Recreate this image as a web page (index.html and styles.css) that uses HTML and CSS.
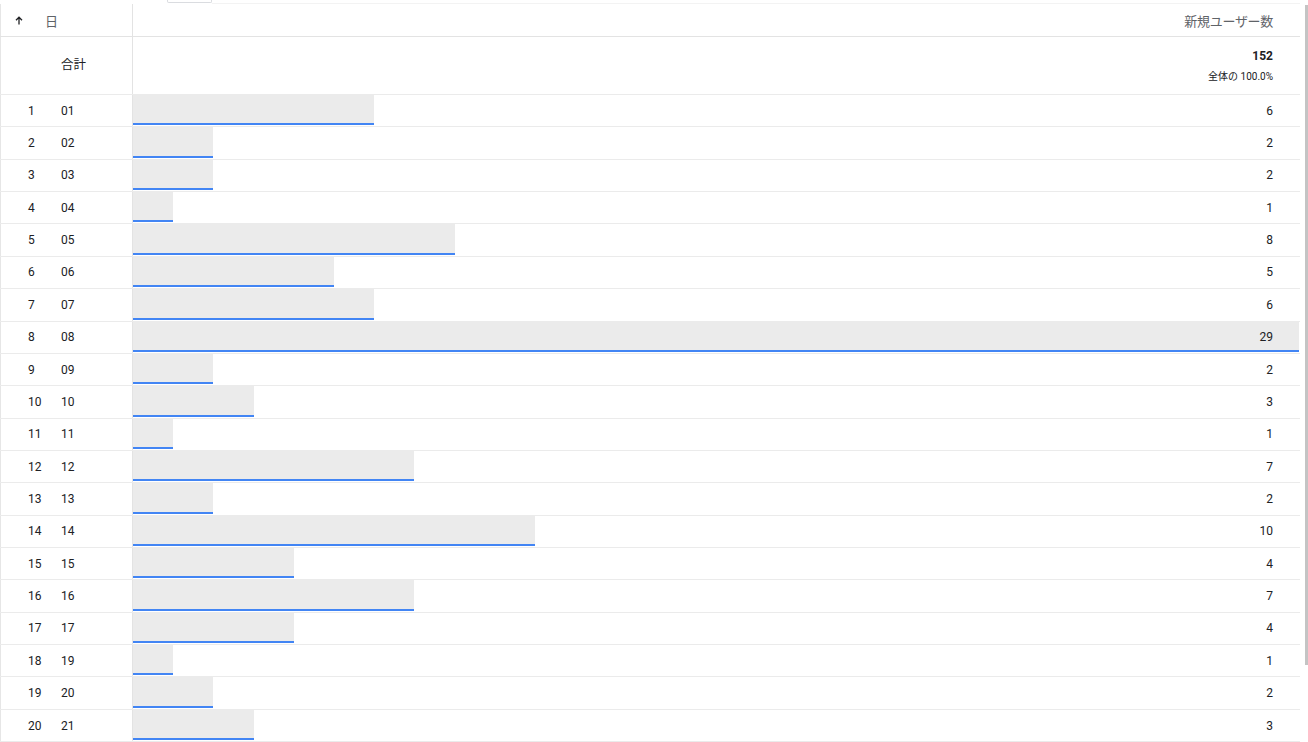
FILE: index.html
```html
<!DOCTYPE html>
<html lang="ja">
<head>
<meta charset="utf-8">
<title>新規ユーザー数</title>
<link rel="stylesheet" href="styles.css">
</head>
<body>
<div class="page">
  <div class="main">
    <div class="topstrip"><div class="tab"></div><div class="topline"></div></div>
    <div class="table">
      <div class="row head">
        <div class="c1">
          <span class="sort"><svg width="8" height="9" viewBox="0 0 8 9"><path d="M4 8.5V1.5M1 4.3L4 1.2L7 4.3" fill="none" stroke="#202124" stroke-width="1.3"/></svg></span>
          <span class="hdate">日</span>
        </div>
        <div class="c2 hcol"><span class="hval">新規ユーザー数</span></div>
      </div>
      <div class="row total">
        <div class="c1"><span class="idx"></span><span class="date">合計</span></div>
        <div class="c2 tcol">
          <span class="tsum">152</span>
          <span class="tpct">全体の 100.0%</span>
        </div>
      </div>
      <div class="row"><div class="c1"><span class="idx">1</span><span class="date">01</span></div><div class="c2"><div class="bar" style="width:20.69%"></div><span class="val">6</span></div></div>
      <div class="row"><div class="c1"><span class="idx">2</span><span class="date">02</span></div><div class="c2"><div class="bar" style="width:6.897%"></div><span class="val">2</span></div></div>
      <div class="row"><div class="c1"><span class="idx">3</span><span class="date">03</span></div><div class="c2"><div class="bar" style="width:6.897%"></div><span class="val">2</span></div></div>
      <div class="row"><div class="c1"><span class="idx">4</span><span class="date">04</span></div><div class="c2"><div class="bar" style="width:3.448%"></div><span class="val">1</span></div></div>
      <div class="row"><div class="c1"><span class="idx">5</span><span class="date">05</span></div><div class="c2"><div class="bar" style="width:27.586%"></div><span class="val">8</span></div></div>
      <div class="row"><div class="c1"><span class="idx">6</span><span class="date">06</span></div><div class="c2"><div class="bar" style="width:17.241%"></div><span class="val">5</span></div></div>
      <div class="row"><div class="c1"><span class="idx">7</span><span class="date">07</span></div><div class="c2"><div class="bar" style="width:20.69%"></div><span class="val">6</span></div></div>
      <div class="row"><div class="c1"><span class="idx">8</span><span class="date">08</span></div><div class="c2"><div class="bar" style="width:100%"></div><span class="val">29</span></div></div>
      <div class="row"><div class="c1"><span class="idx">9</span><span class="date">09</span></div><div class="c2"><div class="bar" style="width:6.897%"></div><span class="val">2</span></div></div>
      <div class="row"><div class="c1"><span class="idx">10</span><span class="date">10</span></div><div class="c2"><div class="bar" style="width:10.345%"></div><span class="val">3</span></div></div>
      <div class="row"><div class="c1"><span class="idx">11</span><span class="date">11</span></div><div class="c2"><div class="bar" style="width:3.448%"></div><span class="val">1</span></div></div>
      <div class="row"><div class="c1"><span class="idx">12</span><span class="date">12</span></div><div class="c2"><div class="bar" style="width:24.138%"></div><span class="val">7</span></div></div>
      <div class="row"><div class="c1"><span class="idx">13</span><span class="date">13</span></div><div class="c2"><div class="bar" style="width:6.897%"></div><span class="val">2</span></div></div>
      <div class="row"><div class="c1"><span class="idx">14</span><span class="date">14</span></div><div class="c2"><div class="bar" style="width:34.483%"></div><span class="val">10</span></div></div>
      <div class="row"><div class="c1"><span class="idx">15</span><span class="date">15</span></div><div class="c2"><div class="bar" style="width:13.793%"></div><span class="val">4</span></div></div>
      <div class="row"><div class="c1"><span class="idx">16</span><span class="date">16</span></div><div class="c2"><div class="bar" style="width:24.138%"></div><span class="val">7</span></div></div>
      <div class="row"><div class="c1"><span class="idx">17</span><span class="date">17</span></div><div class="c2"><div class="bar" style="width:13.793%"></div><span class="val">4</span></div></div>
      <div class="row"><div class="c1"><span class="idx">18</span><span class="date">19</span></div><div class="c2"><div class="bar" style="width:3.448%"></div><span class="val">1</span></div></div>
      <div class="row"><div class="c1"><span class="idx">19</span><span class="date">20</span></div><div class="c2"><div class="bar" style="width:6.897%"></div><span class="val">2</span></div></div>
      <div class="row"><div class="c1"><span class="idx">20</span><span class="date">21</span></div><div class="c2"><div class="bar" style="width:10.345%"></div><span class="val">3</span></div></div>
    </div>
  </div>
  <div class="scrolltrack"><div class="thumb"></div></div>
</div>
</body>
</html>
```

FILE: styles.css
```css
* { box-sizing: border-box; }
html, body { margin: 0; padding: 0; background: #ffffff; }
body {
  width: 1308px;
  height: 742px;
  overflow: hidden;
  font-family: Roboto, "Noto Sans CJK JP", sans-serif;
  color: #202124;
  font-size: 12px;
}
.page {
  display: flex;
  align-items: flex-start;
}
.main {
  width: 1300px;
  display: flex;
  flex-direction: column;
}
.topstrip {
  height: 4px;
  display: flex;
}
.tab {
  margin-left: 167px;
  width: 45px;
  height: 3px;
  border: 1px solid #dadce0;
  border-top: none;
  border-radius: 0 0 2px 2px;
}
.topline {
  flex: 1;
  height: 4px;
  border-bottom: 1px solid #f3f3f3;
}
.table {
  display: flex;
  flex-direction: column;
}
.row {
  display: flex;
  height: 32.37px;
  border-bottom: 1px solid #ebebeb;
}
.c1 {
  width: 133px;
  flex: none;
  display: flex;
  align-items: center;
  padding-left: 27px;
  border-left: 1px solid #e6e6e6;
  border-right: 1px solid #e3e3e3;
}
.idx {
  width: 33px;
  flex: none;
}
.c2 {
  flex: 1;
  display: grid;
  align-items: center;
  min-width: 0;
  padding-right: 1px;
}
.bar {
  grid-area: 1 / 1;
  align-self: start;
  height: calc(100% - 1px);
  background: #ebebeb;
  border-bottom: 2px solid #4285f4;
}
.val {
  grid-area: 1 / 1;
  justify-self: end;
  padding-right: 26px;
  line-height: 14px;
}
.head {
  height: 33px;
  border-bottom: 1px solid #e3e3e3;
}
.head .c1 {
  padding-left: 14px;
  color: #5f6368;
}
.sort {
  width: 33px;
  display: flex;
  align-items: center;
  padding-top: 1px;
}
.hdate {
  font-size: 13px;
  margin-left: -3px;
}
.hcol {
  justify-items: end;
}
.hval {
  padding-right: 26px;
  font-size: 13px;
  color: #5f6368;
  letter-spacing: -0.3px;
}
.total {
  height: 58px;
}
.total .c1 {
  padding-bottom: 4px;
}
.total .date {
  font-size: 12.5px;
}
.tcol {
  display: flex;
  flex-direction: column;
  align-items: flex-end;
  justify-content: flex-start;
  padding-right: 27px;
  padding-top: 11px;
}
.tsum {
  font-weight: 700;
  font-size: 12px;
  line-height: 17px;
}
.tpct {
  margin-top: 5px;
  font-size: 10px;
  line-height: 14px;
}
.scrolltrack {
  width: 8px;
  padding-left: 5px;
  padding-top: 5px;
}
.thumb {
  width: 3px;
  height: 660px;
  background: #c4c4c4;
}
```
